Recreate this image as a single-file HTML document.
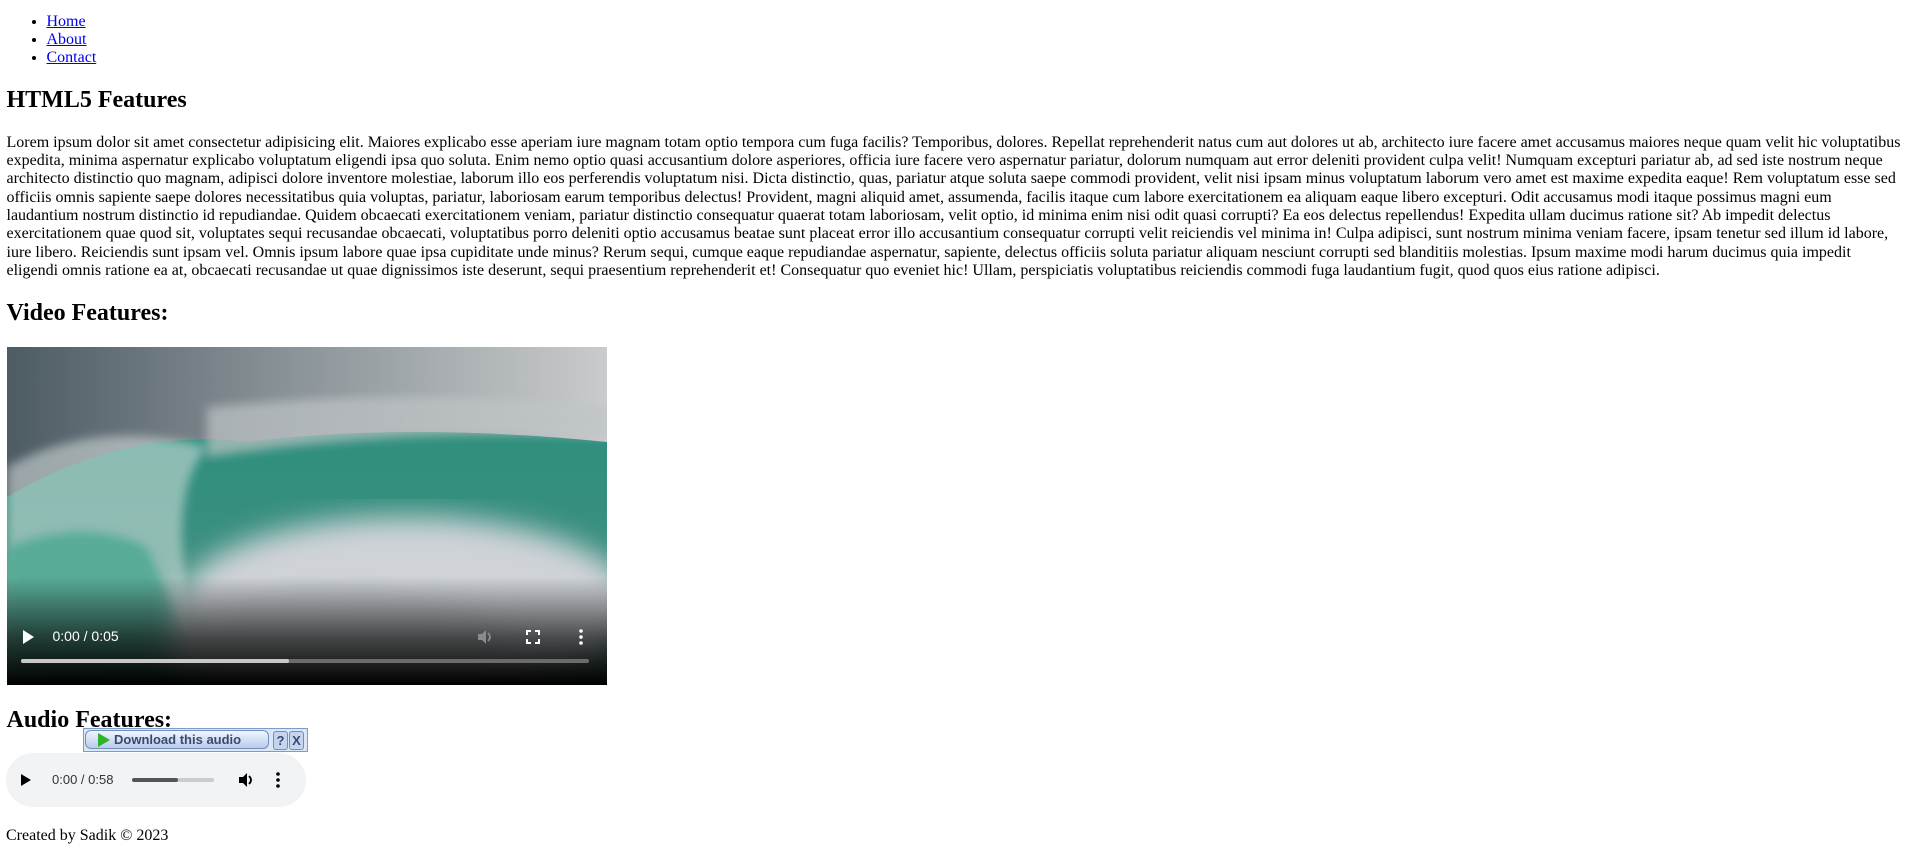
<!DOCTYPE html>
<html><head><meta charset="utf-8"><style>
body{margin:8px 8px 8px 6.5px;font-family:"Liberation Serif",serif;font-size:16px;color:#000;background:#fff}
ul{margin:13px 0 16px;padding-left:40px}
a{color:#00e}
h2{font-size:24px;margin:19.9px 0}
p{margin:16px 0}
.txt{line-height:18.3px}
.vid{position:relative;width:600px;height:338px;overflow:hidden;background:#000}
.ctl{position:absolute;color:#fff;font-family:"Liberation Sans",sans-serif;font-size:14px}
.prog{position:absolute;left:14px;top:312px;width:568px;height:4px;border-radius:2px;background:#6b6b6b}
.prog i{display:block;width:268px;height:4px;background:#c8c8c8;border-radius:2px}
.dl{position:absolute;left:83px;top:728px;width:225px;height:24px;background:#dce6f5;border:1px solid #7e9cc8;box-sizing:border-box;font-family:"Liberation Sans",sans-serif;font-size:13px;font-weight:bold;color:#3a4a6a}
.aud{position:absolute;left:6px;top:753px;width:300px;height:54px;border-radius:27px;background:#f1f3f4;font-family:"Liberation Sans",sans-serif;font-size:13px;color:#333}
</style></head><body>
<ul><li><a href="#">Home</a></li><li><a href="#">About</a></li><li><a href="#">Contact</a></li></ul>
<h2>HTML5 Features</h2>
<p class="txt">Lorem ipsum dolor sit amet consectetur adipisicing elit. Maiores explicabo esse aperiam iure magnam totam optio tempora cum fuga facilis? Temporibus, dolores. Repellat reprehenderit natus cum aut dolores ut ab, architecto iure facere amet accusamus maiores neque quam velit hic voluptatibus expedita, minima aspernatur explicabo voluptatum eligendi ipsa quo soluta. Enim nemo optio quasi accusantium dolore asperiores, officia iure facere vero aspernatur pariatur, dolorum numquam aut error deleniti provident culpa velit! Numquam excepturi pariatur ab, ad sed iste nostrum neque architecto distinctio quo magnam, adipisci dolore inventore molestiae, laborum illo eos perferendis voluptatum nisi. Dicta distinctio, quas, pariatur atque soluta saepe commodi provident, velit nisi ipsam minus voluptatum laborum vero amet est maxime expedita eaque! Rem voluptatum esse sed officiis omnis sapiente saepe dolores necessitatibus quia voluptas, pariatur, laboriosam earum temporibus delectus! Provident, magni aliquid amet, assumenda, facilis itaque cum labore exercitationem ea aliquam eaque libero excepturi. Odit accusamus modi itaque possimus magni eum laudantium nostrum distinctio id repudiandae. Quidem obcaecati exercitationem veniam, pariatur distinctio consequatur quaerat totam laboriosam, velit optio, id minima enim nisi odit quasi corrupti? Ea eos delectus repellendus! Expedita ullam ducimus ratione sit? Ab impedit delectus exercitationem quae quod sit, voluptates sequi recusandae obcaecati, voluptatibus porro deleniti optio accusamus beatae sunt placeat error illo accusantium consequatur corrupti velit reiciendis vel minima in! Culpa adipisci, sunt nostrum minima veniam facere, ipsam tenetur sed illum id labore, iure libero. Reiciendis sunt ipsam vel. Omnis ipsum labore quae ipsa cupiditate unde minus? Rerum sequi, cumque eaque repudiandae aspernatur, sapiente, delectus officiis soluta pariatur aliquam nesciunt corrupti sed blanditiis molestias. Ipsum maxime modi harum ducimus quia impedit eligendi omnis ratione ea at, obcaecati recusandae ut quae dignissimos iste deserunt, sequi praesentium reprehenderit et! Consequatur quo eveniet hic! Ullam, perspiciatis voluptatibus reiciendis commodi fuga laudantium fugit, quod quos eius ratione adipisci.</p>
<h2>Video Features:</h2>
<div class="vid">
<svg width="600" height="338" style="position:absolute;left:0;top:0">
<defs>
<linearGradient id="sky" x1="0" x2="1"><stop offset="0" stop-color="#4d5b63"/><stop offset=".5" stop-color="#8d969b"/><stop offset="1" stop-color="#c9cbcc"/></linearGradient>
<linearGradient id="fall" x1="0" y1="0" x2="0" y2="1"><stop offset="0" stop-color="#2e8f7d"/><stop offset=".6" stop-color="#3f8f80"/><stop offset="1" stop-color="#7da69e"/></linearGradient>
<filter id="b"><feGaussianBlur stdDeviation="14"/></filter>
<filter id="b2"><feGaussianBlur stdDeviation="5"/></filter>
<linearGradient id="shade" x1="0" y1="0" x2="0" y2="1"><stop offset=".68" stop-color="#000" stop-opacity="0"/><stop offset=".86" stop-color="#000" stop-opacity=".65"/><stop offset="1" stop-color="#000"/></linearGradient>
</defs>
<rect width="600" height="338" fill="url(#sky)"/>
<path d="M0 150 Q120 80 240 95 Q400 75 600 95 L600 338 L0 338Z" fill="url(#fall)"/>
<path d="M0 120 Q90 70 200 100 Q150 160 200 320 L0 338Z" fill="#d8e2e0" opacity=".55" filter="url(#b2)"/>
<path d="M0 200 Q80 170 140 200 L200 338 L0 338Z" fill="#3fa58c" opacity=".7" filter="url(#b2)"/>
<ellipse cx="400" cy="260" rx="230" ry="90" fill="#cfd3d8" filter="url(#b)"/>
<ellipse cx="330" cy="300" rx="170" ry="60" fill="#c5c9ce" filter="url(#b)"/>
<path d="M200 60 Q400 40 600 60 L600 90 Q400 80 200 110Z" fill="#bfc4c6" opacity=".7" filter="url(#b2)"/>
<rect width="600" height="338" fill="url(#shade)"/>
</svg>
<svg class="ctl" style="left:14px;top:282px" width="14" height="16"><path d="M2 1L13 8L2 15Z" fill="#fff"/></svg>
<div class="ctl" style="left:46px;top:281px">0:00 / 0:05</div>
<svg class="ctl" style="left:470px;top:282px" width="16" height="16"><path d="M1 5h4l4-4v14l-4-4H1z" fill="#8a8a8a"/><path d="M11 4q4 4 0 8" stroke="#8a8a8a" fill="none" stroke-width="1.8"/></svg>
<svg class="ctl" style="left:519px;top:283px" width="14" height="14" fill="none" stroke="#fff" stroke-width="2"><path d="M1 5V1h4M9 1h4v4M13 9v4H9M5 13H1V9"/></svg>
<svg class="ctl" style="left:572px;top:282px" width="4" height="16"><circle cx="2" cy="2" r="1.8" fill="#fff"/><circle cx="2" cy="8" r="1.8" fill="#fff"/><circle cx="2" cy="14" r="1.8" fill="#fff"/></svg>
<div class="prog"><i></i></div>
</div>
<h2 style="margin-bottom:0;margin-top:22px">Audio Features:</h2>
<div class="dl"><span style="position:absolute;left:1px;top:1px;width:184px;height:19px;border:1px solid #6f8fc0;border-radius:6px;background:linear-gradient(#f0f5ff,#b9cbea);box-sizing:border-box"></span><svg style="position:absolute;left:13px;top:3px" width="14" height="16"><path d="M1 1L13 8L1 15Z" fill="#2bb52b"/></svg><span style="position:absolute;left:30px;top:3px">Download this audio</span><span style="position:absolute;left:189px;top:2px;width:13px;height:17px;border:1px solid #6f8fc0;border-radius:3px;background:#c5d5ef;text-align:center;line-height:17px">?</span><span style="position:absolute;left:205px;top:2px;width:13px;height:17px;border:1px solid #6f8fc0;border-radius:3px;background:#c5d5ef;text-align:center;line-height:17px">X</span></div>
<div class="aud">
<svg style="position:absolute;left:14px;top:20px" width="12" height="14"><path d="M1 1L11 7L1 13Z" fill="#000"/></svg>
<span style="position:absolute;left:46px;top:19px">0:00 / 0:58</span>
<span style="position:absolute;left:126px;top:25px;width:82px;height:4px;background:#ccc;border-radius:2px"><i style="display:block;width:46px;height:4px;background:#555;border-radius:2px"></i></span>
<svg style="position:absolute;left:232px;top:19px" width="16" height="16"><path d="M1 5h4l4-4v14l-4-4H1z" fill="#000"/><path d="M11 4q4 4 0 8" stroke="#000" fill="none" stroke-width="1.8"/></svg>
<svg style="position:absolute;left:270px;top:19px" width="4" height="16"><circle cx="2" cy="2" r="1.8"/><circle cx="2" cy="8" r="1.8"/><circle cx="2" cy="14" r="1.8"/></svg>
</div>
<p style="position:absolute;left:6px;top:827px;margin:0">Created by Sadik © 2023</p>
</body></html>
